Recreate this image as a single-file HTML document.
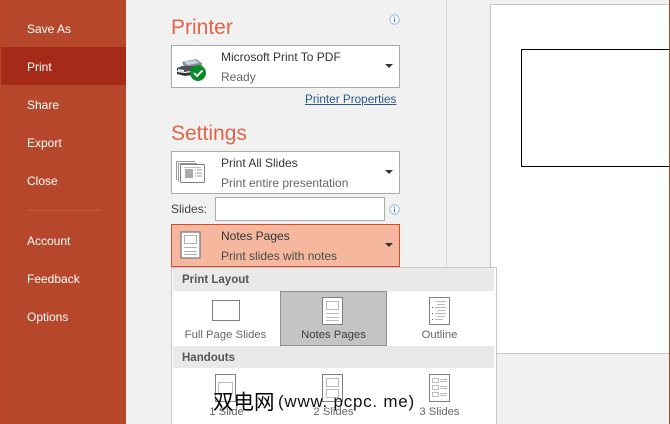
<!DOCTYPE html>
<html><head><meta charset="utf-8">
<style>
html,body{margin:0;padding:0}
body{width:670px;height:424px;overflow:hidden;position:relative;background:#f1f1f1;font-family:"Liberation Sans","Noto Sans CJK SC",sans-serif}
.a{position:absolute;white-space:nowrap}
.nav{left:27px;color:#fff;font-size:12px;line-height:16px}
.h{left:171px;color:#e0654a;font-size:21px;line-height:26px}
.box{position:absolute;left:171px;width:227px;background:#fff;border:1px solid #ababab}
.t1{left:221px;font-size:12px;line-height:16px;color:#333}
.t2{left:221px;font-size:12px;line-height:16px;color:#666}
.arr{position:absolute;left:385px;width:0;height:0;border-left:4px solid transparent;border-right:4px solid transparent;border-top:4px solid #333}
.band{position:absolute;left:173px;width:321px;background:#e9e9e9;color:#555;font-size:11.5px;font-weight:bold;line-height:24px;text-indent:9px}
.lab{font-size:11.3px;line-height:16px;color:#666;text-align:center}
svg{position:absolute;overflow:visible}
</style></head><body>

<div class="a" style="left:0;top:0;width:126px;height:424px;background:#b7472a"></div>
<div class="a" style="left:0;top:0;width:1px;height:424px;background:#c04522"></div>
<div class="a" style="left:1px;top:47px;width:125px;height:38px;background:#a52a17"></div>
<div class="a nav" style="top:21px">Save As</div>
<div class="a nav" style="top:59px">Print</div>
<div class="a nav" style="top:97px">Share</div>
<div class="a nav" style="top:135px">Export</div>
<div class="a nav" style="top:173px">Close</div>
<div class="a" style="left:27px;top:210px;width:73px;height:1px;background:#d0583a"></div>
<div class="a nav" style="top:233px">Account</div>
<div class="a nav" style="top:271px">Feedback</div>
<div class="a nav" style="top:309px">Options</div>

<div class="a" style="left:446px;top:0;width:1px;height:268px;background:#dcdcdc"></div>
<div class="a" style="left:490px;top:4px;width:179px;height:350px;background:#fff;border-left:1px solid #c6c6c6;border-top:1px solid #c6c6c6;border-bottom:1px solid #c6c6c6;box-sizing:border-box"></div>
<div class="a" style="left:521px;top:49px;width:148px;height:118px;box-sizing:border-box;border:1px solid #000;border-right:0"></div>
<div class="a" style="left:669px;top:0;width:1px;height:424px;background:#a8472a"></div>

<div class="a h" style="top:15px">Printer</div>
<svg style="left:389px;top:14px" width="11" height="11" viewBox="0 0 11 11"><circle cx="5.5" cy="5.5" r="4.7" fill="#fff" stroke="#8fb4e0"/><rect x="5" y="2.6" width="1.1" height="1.1" fill="#4a78b0"/><rect x="5" y="4.6" width="1.1" height="3.6" fill="#4a78b0"/></svg>

<div class="box" style="top:45px;height:41px"></div>
<svg style="left:176px;top:57px" width="32" height="26" viewBox="0 0 32 26">
<path d="M6 5 L20 2 L26 6 L26 11 L10 14 Z" fill="#8a9096"/>
<path d="M8 5 L19 3 L23 6 L12 8 Z" fill="#c8d4dc"/>
<path d="M1 11 L6 9 L22 9 L22 13 L8 15 L1 14 Z" fill="#4c5054"/>
<path d="M1 15 L9 16 L16 15 L16 18 L9 19 L1 17 Z" fill="#33373a"/>
<path d="M2 12 L8 13 L8 15 L2 14 Z" fill="#e8e8e8"/>
<circle cx="22" cy="16" r="8" fill="#0b8a2a"/>
<path d="M18 16 L21 19 L26.5 13.5" fill="none" stroke="#fff" stroke-width="1.8"/>
</svg>
<div class="a t1" style="top:49px">Microsoft Print To PDF</div>
<div class="a t2" style="top:69px">Ready</div>
<div class="arr" style="top:64px"></div>
<div class="a" style="left:305px;top:92px;font-size:11.75px;line-height:16px;color:#2a5a8c;text-decoration:underline">Printer Properties</div>

<div class="a h" style="top:121px">Settings</div>
<div class="box" style="top:151px;height:41px"></div>
<svg style="left:176px;top:160px" width="30" height="25" viewBox="0 0 30 25">
<path d="M.5 20V1.5H19M2.500 21.500V3.500H21" fill="none" stroke="#9a9a9a"/>
<rect x="4.500" y="4.500" width="24" height="18" rx="1" fill="#fff" stroke="#808080"/>
<rect x="9" y="9" width="8" height="9" fill="#ababab"/>
<path d="M19 10h1M21 10h5M19 13h1M21 13h5M19 16h1M21 16h5" stroke="#9a9a9a"/>
<path d="M8 7.500h17" stroke="#c0c0c0"/>
</svg>
<div class="a t1" style="top:155px">Print All Slides</div>
<div class="a t2" style="top:175px">Print entire presentation</div>
<div class="arr" style="top:170px"></div>

<div class="a" style="left:171px;top:201px;font-size:12px;line-height:16px;color:#444">Slides:</div>
<div class="a" style="left:215px;top:197px;width:168px;height:22px;background:#fff;border:1px solid #ababab"></div>
<svg style="left:389px;top:204px" width="11" height="11" viewBox="0 0 11 11"><circle cx="5.500" cy="5.500" r="4.700" fill="#fff" stroke="#8fb4e0"/><rect x="5" y="2.600" width="1.100" height="1.100" fill="#4a78b0"/><rect x="5" y="4.600" width="1.100" height="3.600" fill="#4a78b0"/></svg>

<div class="box" style="top:224px;height:41px;background:#f5b89e;border-color:#d9492c"></div>
<svg style="left:180px;top:231px" width="22" height="28" viewBox="0 0 22 28">
<rect x="1" y="1" width="19" height="26" fill="#fff" stroke="#8a8a8a" stroke-width="1.500"/>
<rect x="4.500" y="4.500" width="12" height="8" fill="none" stroke="#b0b0b0"/>
<path d="M4 16.500h13M4 20.500h13M4 23.500h13" stroke="#b0b0b0"/>
</svg>
<div class="a t1" style="top:228px;color:#333">Notes Pages</div>
<div class="a t1" style="top:248px;color:#4a4a4a">Print slides with notes</div>
<div class="arr" style="top:243px"></div>

<div class="a" style="left:171px;top:267px;width:326px;height:157px;background:#fff;border:1px solid #c6c6c6;border-bottom:0;box-sizing:border-box"></div>
<div class="band" style="top:268px;height:23px">Print Layout</div>
<div class="band" style="top:346px;height:22px">Handouts</div>

<div class="a" style="left:280px;top:291px;width:107px;height:55px;box-sizing:border-box;background:#c4c4c4;border:1px solid #8f8f8f"></div>

<svg style="left:212px;top:300px" width="28" height="21" viewBox="0 0 28 21"><rect x=".5" y=".5" width="27" height="20" fill="#fff" stroke="#808080"/></svg>
<svg style="left:322px;top:297px" width="22" height="28" viewBox="0 0 22 28">
<rect x=".5" y=".5" width="20" height="27" fill="#fff" stroke="#808080"/>
<rect x="4.500" y="4.500" width="12" height="8" fill="none" stroke="#bbb"/>
<path d="M4 16.500h13M4 20.500h13M4 23.500h13" stroke="#bbb"/>
</svg>
<svg style="left:429px;top:297px" width="22" height="28" viewBox="0 0 22 28">
<rect x=".5" y=".5" width="20" height="27" fill="#fff" stroke="#808080"/>
<path d="M6 4.500h11M8 7.500h8M6 10.500h11M8 13.500h8M6 16.500h11M8 19.500h8M6 22.500h8" stroke="#bbb"/>
<path d="M3 10.500h1M3 16.500h1M3 22.500h1" stroke="#555"/>
</svg>

<div class="a lab" style="left:172px;top:327px;width:107px">Full Page Slides</div>
<div class="a lab" style="left:280px;top:327px;width:107px;color:#3c3c3c">Notes Pages</div>
<div class="a lab" style="left:386px;top:327px;width:107px">Outline</div>

<svg style="left:215px;top:374px" width="22" height="28" viewBox="0 0 22 28">
<rect x=".5" y=".5" width="20" height="27" fill="#fff" stroke="#808080"/>
<rect x="3.500" y="8.500" width="14" height="11" fill="none" stroke="#bbb"/>
</svg>
<svg style="left:322px;top:374px" width="22" height="28" viewBox="0 0 22 28">
<rect x=".5" y=".5" width="20" height="27" fill="#fff" stroke="#808080"/>
<rect x="4.500" y="4.500" width="12" height="8" fill="none" stroke="#bbb"/>
<rect x="4.500" y="15.500" width="12" height="8" fill="none" stroke="#bbb"/>
</svg>
<svg style="left:429px;top:374px" width="22" height="28" viewBox="0 0 22 28">
<rect x=".5" y=".5" width="20" height="27" fill="#fff" stroke="#808080"/>
<rect x="3.500" y="4.500" width="6" height="4" fill="none" stroke="#bbb"/>
<rect x="3.500" y="11.500" width="6" height="4" fill="none" stroke="#bbb"/>
<rect x="3.500" y="18.500" width="6" height="4" fill="none" stroke="#bbb"/>
<path d="M11 5.500h7M11 7.500h7M11 12.500h7M11 14.500h7M11 19.500h7M11 21.500h7" stroke="#bbb"/>
</svg>

<div class="a lab" style="left:173px;top:404px;width:107px">1 Slide</div>
<div class="a lab" style="left:280px;top:404px;width:107px">2 Slides</div>
<div class="a lab" style="left:386px;top:404px;width:107px">3 Slides</div>

<div class="a" style="left:213px;top:390px;font-size:20.500px;line-height:26px;color:#000;text-shadow:0 0 1px #fff">双电网</div>
<div class="a" style="left:278px;top:389px;font-size:17px;line-height:26px;letter-spacing:.75px;color:#111;text-shadow:0 0 1px #fff">(www. pcpc. me)</div>
</body></html>
